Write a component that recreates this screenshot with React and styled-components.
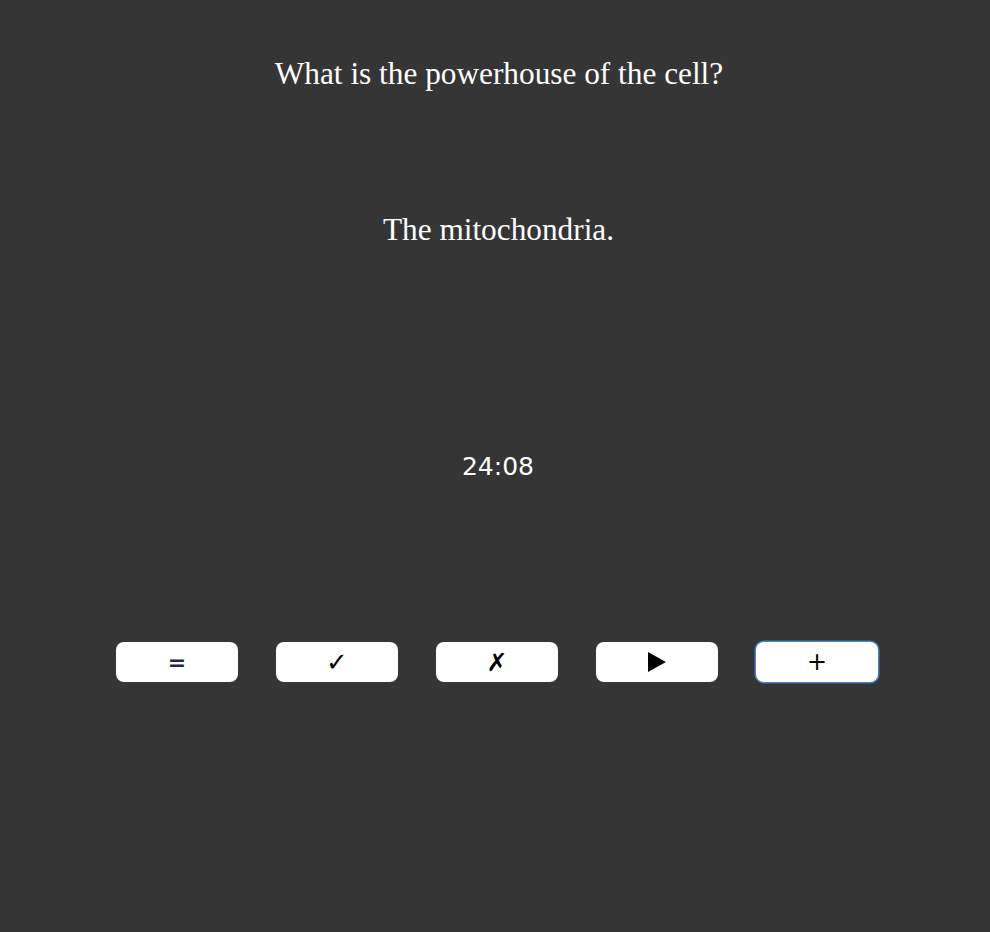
import React from 'react'
import styled, { createGlobalStyle } from 'styled-components'

const Global = createGlobalStyle`
body {
  margin:0;
  background-color:#353535;
}
`

function App() {
  return (
    <Page>
      <Global />
      <Question>What is the powerhouse of the cell?</Question>
      <Answer>The mitochondria.</Answer>
      <Timer>24:08</Timer>
      <Controls>
        <Button $ink='#2b2540' $size='22px'>=</Button>
        <Button $size='26px'>✓</Button>
        <Button $size='25px'>✗</Button>
        <Button>
          <svg width='20' height='22' viewBox='0 0 20 22'>
            <polygon points='1,1 19,11 1,21' fill='#000' />
          </svg>
        </Button>
        <Button $focused $size='24px'>+</Button>
      </Controls>
    </Page>
  )
}

export default App

const Page = styled.div`
display:flex;
flex-direction:column;
align-items:center;
min-height:932px;
font-family:"Liberation Serif", serif;
color:#fff;
`

const Question = styled.div`
font-size:31.3px;
margin-top:56px;
margin-left:8px;
line-height:36px;
`

const Answer = styled.div`
font-size:31.3px;
margin-top:120px;
margin-left:7px;
line-height:36px;
`

const Timer = styled.div`
font-family:"DejaVu Sans", sans-serif;
font-size:25px;
margin-top:204px;
line-height:30px;
margin-left:6px;
`

const Controls = styled.div`
display:flex;
gap:38px;
margin-top:160px;
margin-left:4px;
`

const Button = styled.button`
width:122px;
height:40px;
border:none;
border-radius:8px;
background-color:#fff;
color:${p => p.$ink || '#000'};
font-family:"DejaVu Sans", sans-serif;
font-size:${p => p.$size || '20px'};
font-weight:bold;
display:flex;
align-items:center;
justify-content:center;
padding:0;
${p => p.$focused && `
  font-weight:normal;
  box-shadow:0 0 0 1.5px #4a7fc0;
`}
`
